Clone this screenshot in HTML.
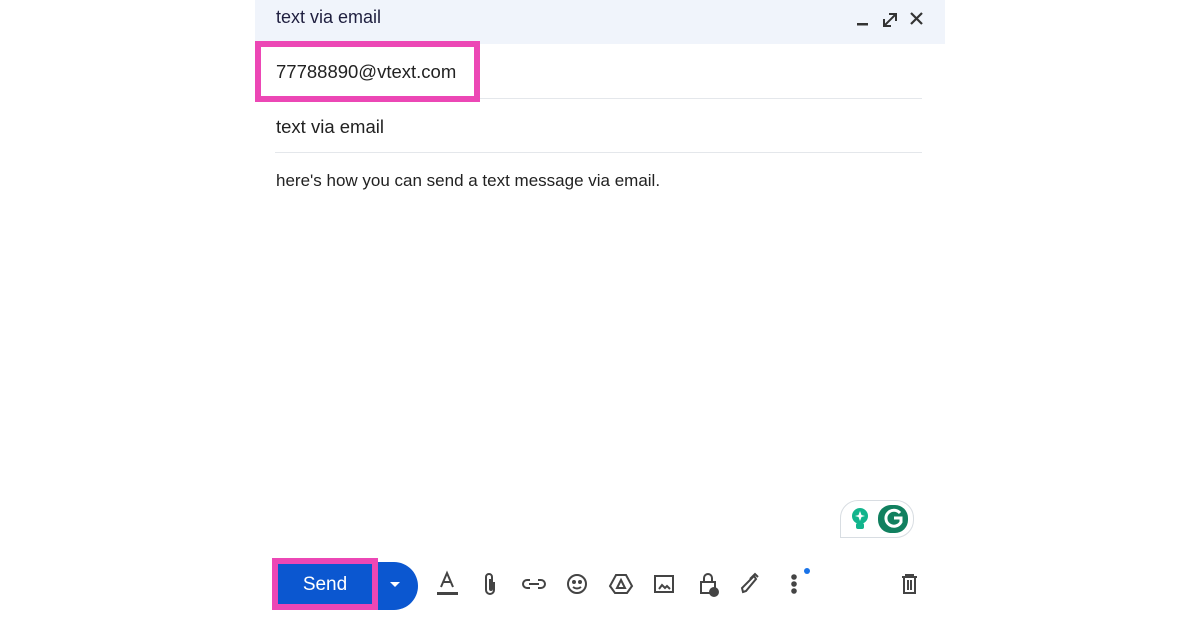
<!DOCTYPE html>
<html><head><style>
body{margin:0;width:1200px;height:628px;background:#fff;position:relative;font-family:"Liberation Sans",Arial,sans-serif;overflow:hidden}
.a{position:absolute}
</style></head><body>
<div class="a" style="left:255px;top:0;width:690px;height:44px;background:#f0f4fb"></div>
<div class="a" style="left:276px;top:7px;font-size:18px;color:#1f1f3f">text via email</div>
<svg class="a" style="left:852px;top:8px" width="80" height="22" viewBox="0 0 80 22">
<rect x="5" y="15" width="11" height="2.5" fill="#333"/>
<path d="M33 17 L43 7 M37 6h7v7 M32 11v7h7" stroke="#333" stroke-width="2" fill="none"/>
<path d="M59 5 L70 16 M70 5 L59 16" stroke="#333" stroke-width="2.2"/>
</svg>
<div class="a" style="left:255px;top:41px;width:213px;height:49px;border:6px solid #ec47b5"></div>
<div class="a" style="left:276px;top:61px;font-size:18.5px;color:#222">77788890@vtext.com</div>
<div class="a" style="left:480px;top:98px;width:442px;height:1px;background:#e4e7eb"></div>
<div class="a" style="left:275px;top:152px;width:647px;height:1px;background:#e4e7eb"></div>
<div class="a" style="left:276px;top:116px;font-size:18.5px;color:#222">text via email</div>
<div class="a" style="left:276px;top:171px;font-size:17px;color:#222">here's how you can send a text message via email.</div>
<div class="a" style="left:840px;top:500px;width:72px;height:36px;border:1px solid #d8dde2;border-radius:18px 18px 18px 0"></div>
<svg class="a" style="left:846px;top:504px" width="64" height="30" viewBox="0 0 64 30">
<circle cx="14" cy="12" r="8" fill="#12b48c"/><rect x="10" y="19" width="8" height="6" rx="2" fill="#12b48c"/>
<path d="M14 7 L15.5 11 L19 12 L15.5 13 L14 17 L12.5 13 L9 12 L12.5 11Z" fill="#fff"/>
<rect x="32" y="1" width="30" height="28" rx="13" fill="#11805f"/>
<path d="M54 9 A8 8 0 1 0 55 18 L55 14 L48 14" stroke="#fff" stroke-width="3" fill="none"/>
</svg>
<div class="a" style="left:366px;top:562px;width:52px;height:48px;background:#0b57d0;border-radius:0 24px 24px 0"></div>
<svg class="a" style="left:388px;top:580px" width="14" height="10"><path d="M2 2 L12 2 L7 7Z" fill="#fff"/></svg>
<div class="a" style="left:272px;top:558px;width:94px;height:40px;border:6px solid #ec47b5;background:#0b57d0;color:#fff;font-size:19px;text-align:center;line-height:42px;">Send</div>
<svg class="a" style="left:430px;top:568px" width="500" height="34" viewBox="430 568 500 34" fill="none" stroke="#444" stroke-width="2">
<path d="M441 587 L447 573 L453 587 M443 582h8"/><rect x="437" y="592" width="21" height="3" fill="#444" stroke="none"/>
<path d="M494 582 v8 a4 4 0 0 1 -8 0 v-13 a3 3 0 0 1 6 0 v12 a1 1 0 0 1 -2 0 v-10"/>
<path d="M530 580h-3a4 4 0 0 0 0 8h3 M538 580h3a4 4 0 0 1 0 8h-3 M529 584h10"/>
<circle cx="577" cy="584" r="9"/><circle cx="574" cy="582" r="1" fill="#444"/><circle cx="580" cy="582" r="1" fill="#444"/><path d="M573 587 q4 3 8 0"/>
<path d="M616 575h10l6 11-5 7h-12l-5-7z M621 580l4 8h-8z"/>
<rect x="655" y="576" width="18" height="16"/><path d="M659 589l3-4 3 3 2-2 3 3" />
<path d="M701 593v-11h14v11z M704 582v-4a4 4 0 0 1 8 0v4"/><circle cx="714" cy="592" r="4" fill="#444"/>
<path d="M743 592l3-1 10-12-2-3-12 12z M750 579l5-5 3 3"/>
<circle cx="794" cy="577" r="1.8" fill="#444"/><circle cx="794" cy="584" r="1.8" fill="#444"/><circle cx="794" cy="591" r="1.8" fill="#444"/>
<circle cx="807" cy="571" r="3" fill="#1a73e8" stroke="none"/>
<path d="M902 577h15 M906 577v-2h7v2 M904 577v16h11v-16 M908 580v10 M911 580v10"/>
</svg>
</body></html>
